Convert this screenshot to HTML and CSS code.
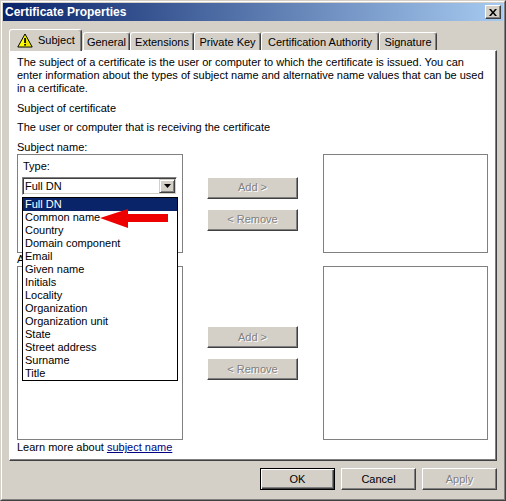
FILE: index.html
```html
<!DOCTYPE html>
<html>
<head>
<meta charset="utf-8">
<title>Certificate Properties</title>
<link rel="stylesheet" href="styles.css">
</head>
<body>
<div class="window">
  <div class="frame">
    <div class="titlebar">
      <span class="title">Certificate Properties</span>
      <span class="close"><svg width="8" height="7" viewBox="0 0 8 7"><path d="M0 0H2L4 2.4L6 0H8L5.1 3.5L8 7H6L4 4.6L2 7H0L2.9 3.5Z" fill="#000"/></svg></span>
    </div>
    <div class="body">
      <div class="tabs">
        <div class="tab active t-subject">
          <svg class="warn" width="16" height="15" viewBox="0 0 16 15"><path d="M8 1L15.2 14H0.8Z" fill="#ffff00" stroke="#000" stroke-width="1" stroke-linejoin="round"/><path d="M8 3.5L13.5 13.2H8Z" fill="#d8c800" opacity="0.5"/><rect x="7.2" y="5" width="1.7" height="5" fill="#000"/><rect x="7.2" y="11" width="1.7" height="1.6" fill="#000"/></svg>
          <span>Subject</span>
        </div>
        <div class="tab t-general">General</div>
        <div class="tab t-ext">Extensions</div>
        <div class="tab t-pk">Private Key</div>
        <div class="tab t-ca">Certification Authority</div>
        <div class="tab t-sig">Signature</div>
      </div>
      <div class="panel">
        <p class="intro">The subject of a certificate is the user or computer to which the certificate is issued. You can<br>enter information about the types of subject name and alternative name values that can be used<br>in a certificate.</p>
        <p class="heading">Subject of certificate</p>
        <p class="sub">The user or computer that is receiving the certificate</p>
        <div class="label">Subject name:</div>
        <div class="row row1">
          <div class="group">
            <div class="type-label">Type:</div>
            <div class="combo">
              <span class="combo-value">Full DN</span>
              <span class="combo-btn"><svg width="7" height="4" viewBox="0 0 7 4"><path d="M0 0H7L3.5 4Z" fill="#000"/></svg></span>
              <ul class="dropdown">
                <li class="sel">Full DN</li>
                <li>Common name</li>
                <li>Country</li>
                <li>Domain component</li>
                <li>Email</li>
                <li>Given name</li>
                <li>Initials</li>
                <li>Locality</li>
                <li>Organization</li>
                <li>Organization unit</li>
                <li>State</li>
                <li>Street address</li>
                <li>Surname</li>
                <li>Title</li>
              </ul>
              <svg class="red-arrow" width="68" height="20" viewBox="0 0 68 20"><path d="M0 10L28 1V6H68V14H28V20Z" fill="#ee0000"/></svg>
            </div>
          </div>
          <div class="btns">
            <button class="btn side disabled">Add &gt;</button>
            <button class="btn side disabled">&lt; Remove</button>
          </div>
          <div class="listbox"></div>
        </div>
        <div class="label">Alternative name:</div>
        <div class="row row2">
          <div class="group"></div>
          <div class="btns">
            <button class="btn side disabled">Add &gt;</button>
            <button class="btn side disabled">&lt; Remove</button>
          </div>
          <div class="listbox"></div>
        </div>
        <div class="learn">Learn more about <a class="link">subject name</a></div>
      </div>
      <div class="footer">
        <button class="btn foot default">OK</button>
        <button class="btn foot">Cancel</button>
        <button class="btn foot disabled">Apply</button>
      </div>
    </div>
  </div>
</div>
</body>
</html>
```
FILE: styles.css
```css
* { box-sizing: border-box; }
html, body { margin: 0; padding: 0; }
body {
  font-family: "Liberation Sans", Arial, sans-serif;
  font-size: 11px;
  line-height: 13px;
  color: #000;
  background: #d4d0c8;
}
.window {
  width: 506px;
  height: 501px;
  border: 1px solid;
  border-color: #d4d0c8 #404040 #404040 #d4d0c8;
  background: #d4d0c8;
}
.frame {
  height: 100%;
  border: 1px solid;
  border-color: #fff #808080 #808080 #fff;
  padding: 1px;
  display: flex;
  flex-direction: column;
}
.titlebar {
  height: 18px;
  flex: none;
  display: flex;
  align-items: center;
  justify-content: space-between;
  padding: 0 2px 0 2px;
  background: linear-gradient(to right, #0a246a, #a6caf0);
}
.title {
  color: #fff;
  font-weight: bold;
  font-size: 12px;
}
.close {
  width: 16px;
  height: 14px;
  background: #d4d0c8;
  border: 1px solid;
  border-color: #fff #404040 #404040 #fff;
  box-shadow: inset -1px -1px #808080;
  display: flex;
  align-items: center;
  justify-content: center;
}
.body {
  flex: 1;
  padding: 8px 6px 0;
  display: flex;
  flex-direction: column;
}
.tabs {
  display: flex;
  align-items: flex-end;
  height: 21px;
  flex: none;
}
.tab {
  height: 18px;
  background: #d4d0c8;
  border: 1px solid;
  border-bottom: none;
  border-color: #fff #404040 transparent #fff;
  box-shadow: inset -1px 0 #808080;
  border-radius: 3px 3px 0 0;
  display: flex;
  align-items: center;
  justify-content: center;
  white-space: nowrap;
  padding-top: 1px;
}
.tab.active {
  height: 22px;
  margin-bottom: -1px;
  position: relative;
  z-index: 1;
  gap: 5px;
  justify-content: flex-start;
  padding-left: 7px;
  padding-top: 0;
}
.t-subject { width: 73px; }
.t-general { width: 47px; margin-left: 1px; }
.t-ext { width: 64px; }
.t-pk { width: 67px; }
.t-ca { width: 118px; }
.t-sig { width: 58px; }
.panel {
  height: 411px;
  flex: none;
  background: #fff;
  border: 1px solid;
  border-color: #fff #404040 #404040 #fff;
  box-shadow: inset -1px -1px #808080;
  padding: 5px 7px 0 7px;
}
.panel p { margin: 0; white-space: nowrap; }
.intro { margin-bottom: 7px !important; }
.heading { margin-bottom: 6px !important; }
.sub { margin-bottom: 7px !important; }
.label { height: 13px; }
.row { display: flex; }
.row1 { height: 99px; }
.row2 { height: 174px; }
.group {
  width: 166px;
  border: 1px solid #808080;
  padding: 5px 4px 0;
}
.type-label { padding-left: 1px; margin-bottom: 4px; }
.combo {
  position: relative;
  width: 155px;
  height: 18px;
  border: 1px solid;
  border-color: #808080 #fff #fff #808080;
  box-shadow: inset 1px 1px #404040, inset -1px -1px #d4d0c8;
  background: #fff;
  display: flex;
  align-items: center;
  padding-left: 2px;
}
.combo-btn {
  margin-left: auto;
  margin-right: 1px;
  width: 16px;
  height: 14px;
  background: #d4d0c8;
  border: 1px solid;
  border-color: #d4d0c8 #404040 #404040 #d4d0c8;
  box-shadow: inset 1px 1px #fff, inset -1px -1px #808080;
  display: flex;
  align-items: center;
  justify-content: center;
}
.dropdown {
  position: absolute;
  top: 19px;
  left: -1px;
  width: 156px;
  margin: 0;
  padding: 0;
  list-style: none;
  background: #fff;
  border: 1px solid #000;
  z-index: 5;
}
.dropdown li { height: 13px; padding-left: 2px; white-space: nowrap; }
.dropdown li.sel { background: #0a246a; color: #fff; }
.red-arrow {
  position: absolute;
  left: 77px;
  top: 30px;
  z-index: 6;
}
.btns {
  width: 91px;
  margin: 0 25px 0 24px;
  display: flex;
  flex-direction: column;
  justify-content: center;
  gap: 10px;
}
.listbox {
  width: 165px;
  border: 1px solid #808080;
  background: #fff;
}
.learn { margin-top: 1px; }
.link { color: #000080; text-decoration: underline; }
.footer {
  display: flex;
  justify-content: flex-end;
  gap: 6px;
  margin-top: 7px;
}
.btn {
  font: inherit;
  color: #000;
  background: #d4d0c8;
  border: 1px solid;
  border-color: #fff #404040 #404040 #fff;
  box-shadow: inset -1px -1px #808080;
  padding: 0;
  height: 22px;
}
.side { width: 91px; }
.foot { width: 75px; }
.btn.default {
  border-color: #000;
  box-shadow: inset 1px 1px #fff, inset -1px -1px #404040, inset -2px -2px #808080;
}
.btn.disabled { color: #808080; text-shadow: 1px 1px #fff; }
```
